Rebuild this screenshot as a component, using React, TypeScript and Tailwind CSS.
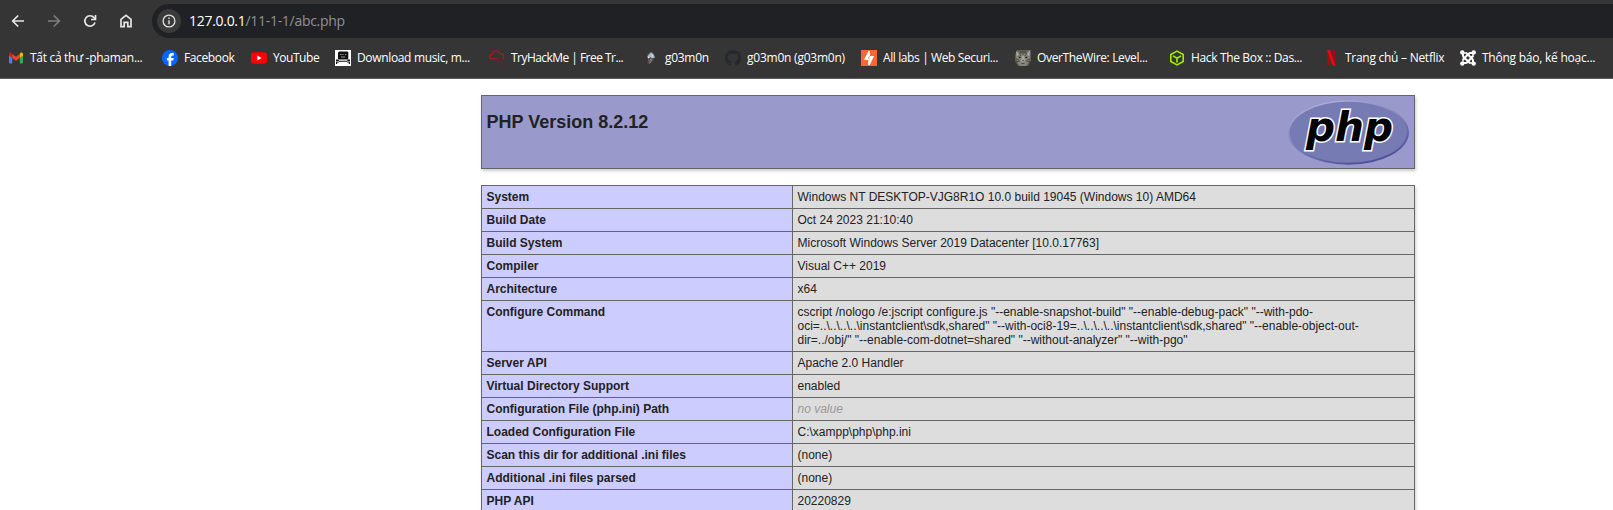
import React from "react";

const Gmail = () => (
  <svg viewBox="0 0 16 16" className="h-4 w-4">
    <path d="M1 4.500v8.100c0 .5.4.9.9.9h2.300V7.200z" fill="#4285f4" />
    <path d="M15 4.500v8.100c0 .5-.4.9-.9.9h-2.300V7.200z" fill="#34a853" />
    <path d="M11.700 3.900v4.100L15 5.500V4.200c0-1.400-1.500-2.100-2.500-1.300z" fill="#fbbc04" />
    <path d="M4.200 8V3.900L8 6.800l3.700-2.900V8L8 10.800z" fill="#ea4335" />
    <path d="M1 4.200v1.300L4.200 8V3.900l-.8-1C2.500 2.100 1 2.800 1 4.200z" fill="#c5221f" />
  </svg>
);

const Facebook = () => (
  <svg viewBox="0 0 16 16" className="h-4 w-4">
    <circle cx="8" cy="8" r="8" fill="#0866ff" />
    <path d="M6.600 15.900V10.500H4.900V8.100h1.700V7c0-2.700 1.200-3.900 3.700-3.900.5 0 1.100.1 1.500.2v2.200h-.9c-1.300 0-1.700.5-1.700 1.500v1.100h2.500l-.4 2.400H9.200v5.400a8 8 0 0 1-2.600 0z" fill="#fff" />
  </svg>
);

const YouTube = () => (
  <svg viewBox="0 0 16 16" className="h-4 w-4">
    <rect x="0" y="2.300" width="16" height="11.400" rx="3" fill="#f00" />
    <path d="M6.300 5.600 10.600 8l-4.300 2.400z" fill="#fff" />
  </svg>
);

const Music = () => (
  <svg viewBox="0 0 16 16" className="h-4 w-4">
    <rect width="16" height="16" fill="#fff" />
    <path d="M4 1.500h8.500l.8 1V9.500H3V2.500z" fill="#111" />
    <path d="M5 4h1.500v1H5zM7.200 4h1.500v.8H7.200zM10 4h1.200v1H10zM6 6.600h4v.8H6z" fill="#999" />
    <path d="M1 9.500h2l1 1.200h8l1-1.200h2v4.500h-1.200v-1.500H12v-.7H4v.7H2.200V14H1z" fill="#111" />
    <path d="M1 11h3v.8H1zM12 11h3v.8h-3z" fill="#bbb" />
  </svg>
);

const TryHackMe = () => (
  <svg viewBox="0 0 16 16" className="h-4 w-4" fill="none" stroke="#c11111" strokeWidth="1.100">
    <path d="M8 8.700H2.900C1.500 8.700.6 7.800.6 6.600c0-1.300 1-2.200 2.600-2.100C3.200 2.300 5 .8 7 .8c1.900 0 3.200 1.100 3.600 2.700 2.200-.4 4 .8 4.200 2.700.1 1-.3 1.900-1 2.500" />
    <path d="M8.500 8.500h2M12.500 8.500h1M8.500 11h1.500M11.500 11h2.500M10 13.200h1M12.500 13.200h2.500M12.500 15.300h2" strokeDasharray="1.500 .6" stroke="#8f1a1e" />
  </svg>
);

const Mask = () => (
  <svg viewBox="0 0 16 16" className="h-4 w-4">
    <path d="M3.500 4.500 7 1.800l3.500 1.200 1.500 4-2 4-3.500 3.500-2-1 .5-4z" fill="#4b4750" />
    <path d="M5 5.500 8 2.200l2.500 2L12 7.500 9 8.500 7.500 7 5 8z" fill="#aebbc4" />
    <path d="M8.500 4 10 6l-1 1zM4 6.500l3 .5-1.500 1.500z" fill="#e6edf0" />
    <path d="m7 8.500 2.500.5-1 3-2.500 2z" fill="#787078" />
    <path d="m5 9 1.500 1L6 12z" fill="#8d4e42" />
  </svg>
);

const GitHub = () => (
  <svg viewBox="0 0 16 16" className="h-4 w-4">
    <path d="M8 0C3.580 0 0 3.580 0 8c0 3.540 2.290 6.530 5.470 7.590.4.070.55-.17.55-.38 0-.19-.01-.82-.01-1.490-2.010.37-2.530-.49-2.690-.94-.09-.23-.48-.94-.82-1.130-.28-.15-.68-.52-.01-.53.63-.01 1.080.58 1.230.82.720 1.210 1.870.87 2.330.66.07-.52.28-.87.51-1.070-1.780-.2-3.640-.89-3.640-3.950 0-.87.31-1.590.82-2.150-.08-.2-.36-1.020.08-2.120 0 0 .67-.21 2.200.82.64-.18 1.320-.27 2-.27s1.360.09 2 .27c1.530-1.040 2.200-.82 2.200-.82.44 1.100.16 1.920.08 2.120.51.56.82 1.270.82 2.150 0 3.070-1.870 3.750-3.650 3.950.29.25.54.73.54 1.480 0 1.070-.01 1.930-.01 2.200 0 .21.15.46.55.38A8.010 8.010 0 0 0 16 8c0-4.420-3.580-8-8-8z" fill="#24292f" />
  </svg>
);

const Burp = () => (
  <svg viewBox="0 0 16 16" className="h-4 w-4">
    <rect width="16" height="16" fill="#ff6633" />
    <path d="M9 1v5h4L8.800 15h-1.600V10H3L7.400 1z" fill="#fff" />
    <path d="M7 1v4.600L4.800 6.600M9 15v-4.600l2.200-1" stroke="#ff6633" strokeWidth="0" fill="none" />
    <path d="M9.200 6.200 7.200 8l1.600 1.200" stroke="#ff6633" strokeWidth=".7" fill="none" />
  </svg>
);

const Cat = () => (
  <svg viewBox="0 0 16 16" className="h-4 w-4">
    <rect width="16" height="16" fill="#5f5f58" />
    <path d="M1 0 5 3h6l4-3v8l-1.500 5L11 16H5l-2.500-3L1 8z" fill="#85857a" />
    <path d="M1 1 4 4 2 6zM15 1l-3 3 2 2z" fill="#b5b1a5" />
    <path d="M6 1v3M8 1v4M10 1v3M1 9l3 1M1 12l4-1M15 9l-3 1M15 12l-4-1M4 3l2 3M12 3l-2 3" stroke="#3b3c38" strokeWidth=".8" />
    <path d="m3 6.500 3 .5-1 1.500zM13 6.500 10 7l1 1.500z" fill="#1c201c" />
    <path d="M7 6h2l1 5-2 1.500L6 11z" fill="#aaa69b" />
    <path d="M7 10h2l-1 1.500zM6 13h4l-2 1z" fill="#353331" />
    <path d="M0 0h2L0 5zM0 11l3 5H0zM16 11l-3 5h3z" fill="#34352f" />
  </svg>
);

const HackTheBox = () => (
  <svg viewBox="0 0 16 16" className="h-4 w-4" fill="none" stroke="#9fef00" strokeWidth="1.600" strokeLinejoin="round">
    <path d="M8 1.100 14.200 4.500v7L8 14.900 1.800 11.500v-7z" />
    <path d="M4 5.900 8 8.200l4-2.300M8 8.200v4.300" />
  </svg>
);

const Netflix = () => (
  <svg viewBox="0 0 16 16" className="h-4 w-4">
    <path d="M4 0h3v15.600L4 16zM9.500 0h3v16l-3-.4z" fill="#a70710" />
    <path d="M4 0h3l5.500 16-3-.4z" fill="#e50914" />
  </svg>
);

const Joomla = () => (
  <svg viewBox="0 0 16 16" className="h-4 w-4">
    <g fill="none" stroke="#fff" strokeWidth="2">
      <path d="M3 3.500v2c0 1 .4 1.500 1 2.100L10 13M3.500 13H5.500c1 0 1.500-.4 2.100-1L13 6M13 12.500v-2c0-1-.4-1.500-1-2.100L6.500 3.200M12.500 3h-2c-1 0-1.500.4-2.100 1L3 9.500" />
      <path d="M3 9v4M9 13h4M13 7V3M7 3H3" strokeWidth="1.400" />
    </g>
    <g fill="#fff">
      <circle cx="2.300" cy="2.400" r="2.200" />
      <circle cx="13.700" cy="2.400" r="2.200" />
      <circle cx="2.300" cy="13.600" r="2.200" />
      <circle cx="13.700" cy="13.600" r="2.200" />
    </g>
  </svg>
);

const bookmarks = [
  { label: "Tất cả thư -phaman...", icon: Gmail, slot: "w-[154px]", track: "tracking-[-0.3px]" },
  { label: "Facebook", icon: Facebook, slot: "w-[89px]", track: "tracking-[-0.38px]" },
  { label: "YouTube", icon: YouTube, slot: "w-[84px]", track: "tracking-[-0.45px]" },
  { label: "Download music, m...", icon: Music, slot: "w-[154px]", track: "tracking-[-0.34px]" },
  { label: "TryHackMe | Free Tr...", icon: TryHackMe, slot: "w-[154px]", track: "tracking-[-0.54px]" },
  { label: "g03m0n", icon: Mask, slot: "w-[82px]", track: "tracking-[-0.3px]" },
  { label: "g03m0n (g03m0n)", icon: GitHub, slot: "w-[136px]", track: "tracking-[-0.23px]" },
  { label: "All labs | Web Securi...", icon: Burp, slot: "w-[154px]", track: "tracking-[-0.39px]" },
  { label: "OverTheWire: Level...", icon: Cat, slot: "w-[154px]", track: "tracking-[-0.35px]" },
  { label: "Hack The Box :: Das...", icon: HackTheBox, slot: "w-[154px]", track: "tracking-[-0.35px]" },
  { label: "Trang chủ – Netflix", icon: Netflix, slot: "w-[137px]", track: "tracking-[-0.27px]" },
  { label: "Thông báo, kế hoạc...", icon: Joomla, slot: "w-[150px]", track: "tracking-[-0.24px]" },
];

const rows: { name: string; value: React.ReactNode }[] = [
  { name: "System", value: "Windows NT DESKTOP-VJG8R1O 10.0 build 19045 (Windows 10) AMD64" },
  { name: "Build Date", value: "Oct 24 2023 21:10:40" },
  { name: "Build System", value: "Microsoft Windows Server 2019 Datacenter [10.0.17763]" },
  { name: "Compiler", value: "Visual C++ 2019" },
  { name: "Architecture", value: "x64" },
  {
    name: "Configure Command",
    value: (
      <>
        cscript /nologo /e:jscript configure.js "--enable-snapshot-build" "--enable-debug-pack" "--with-pdo-
        <br />
        {'oci=..\\..\\..\\..\\instantclient\\sdk,shared" "--with-oci8-19=..\\..\\..\\..\\instantclient\\sdk,shared" "--enable-object-out-'}
        <br />
        dir=../obj/" "--enable-com-dotnet=shared" "--without-analyzer" "--with-pgo"
      </>
    ),
  },
  { name: "Server API", value: "Apache 2.0 Handler" },
  { name: "Virtual Directory Support", value: "enabled" },
  { name: "Configuration File (php.ini) Path", value: <i className="text-[#999]">no value</i> },
  { name: "Loaded Configuration File", value: "C:\\xampp\\php\\php.ini" },
  { name: "Scan this dir for additional .ini files", value: "(none)" },
  { name: "Additional .ini files parsed", value: "(none)" },
  { name: "PHP API", value: "20220829" },
];

const Toolbar = () => (
  <div className="flex h-[42px] items-center">
    <div className="flex h-full w-[152px] shrink-0 items-center gap-5 pl-[10px]">
      <svg viewBox="0 0 16 16" className="h-4 w-4 shrink-0" fill="none" stroke="#e6e6e6" strokeWidth="1.700">
        <path d="M14 8H3M8.200 2.500 2.700 8l5.500 5.500" />
      </svg>
      <svg viewBox="0 0 16 16" className="h-4 w-4 shrink-0" fill="none" stroke="#7d7d7d" strokeWidth="1.700">
        <path d="M2 8h11M7.800 2.500 13.300 8l-5.500 5.500" />
      </svg>
      <svg viewBox="0 0 16 16" className="h-4 w-4 shrink-0" fill="none" stroke="#e6e6e6" strokeWidth="1.700">
        <path d="M13 9.500A5.200 5.200 0 1 1 12 4.600L13 6" />
        <path d="M13.500 2v4.500H9" />
      </svg>
      <svg viewBox="0 0 16 16" className="h-4 w-4 shrink-0" fill="none" stroke="#e6e6e6" strokeWidth="1.700">
        <path d="M3 6.300 8 2.400l5 3.900v7.400H9.800V9.300H6.200v4.400H3z" />
      </svg>
    </div>
    <div className="flex h-[34px] flex-1 items-center rounded-l-[17px] bg-[#202124] pl-[5px]">
      <div className="flex h-6 w-6 items-center justify-center rounded-full bg-[#3a3a3a]">
        <svg viewBox="0 0 16 16" className="h-4 w-4" fill="none" stroke="#e0e0e0" strokeWidth="1.300">
          <circle cx="8" cy="8" r="5.900" />
          <path d="M8 7.200v4M8 4.600v1.400" strokeWidth="1.400" />
        </svg>
      </div>
      <div className="ml-2 whitespace-nowrap text-[14px] leading-5 tracking-[-0.29px] text-white">
        127.0.0.1<span className="text-[#8e9195]">/11-1-1/abc.php</span>
      </div>
    </div>
  </div>
);

const PhpLogo = () => (
  <svg viewBox="0 0 121 65" className="h-[65px] w-[121px]">
    <defs>
      <linearGradient id="rim" x1="0.25" y1="0" x2="0.75" y2="1">
        <stop offset="0" stopColor="#b0b3da" />
        <stop offset="0.5" stopColor="#7a7db5" />
        <stop offset="1" stopColor="#484893" />
      </linearGradient>
    </defs>
    <ellipse cx="60.500" cy="32.500" rx="60.500" ry="32.300" fill="url(#rim)" />
    <ellipse cx="60.300" cy="32.300" rx="58.700" ry="30.500" fill="#777bb3" />
    <text
      x="18"
      y="41"
      fontFamily="DejaVu Sans"
      fontWeight="bold"
      fontStyle="italic"
      fontSize="41"
      textLength="87"
      lengthAdjust="spacingAndGlyphs"
      stroke="#fff"
      strokeWidth="3"
      paintOrder="stroke"
      fill="#000"
    >
      php
    </text>
  </svg>
);

export default function App() {
  return (
    <div className="h-[510px] w-full overflow-hidden bg-white">
      <header className="flex h-[79px] flex-col overflow-hidden border-b border-[#5c5c5c] bg-[#353535] font-['Open_Sans',sans-serif]">
        <Toolbar />
        <nav className="flex h-8 items-center pl-2 text-[12px] text-white">
          {bookmarks.map(({ label, icon: Icon, slot, track }) => (
            <div key={label} className={`flex shrink-0 items-center gap-[6px] ${slot}`}>
              <Icon />
              <span className={`whitespace-nowrap leading-4 ${track}`}>{label}</span>
            </div>
          ))}
        </nav>
      </header>
      <main className="flex flex-col gap-4 pl-[481px] pt-4 font-['Liberation_Sans',sans-serif] text-[#222]">
        <div className="flex h-[74px] w-[934px] justify-between border border-[#666] bg-[#9999cc] pl-[4.500px] pr-[5px] pt-1 shadow-[1px_2px_3px_#ccc]">
          <h1 className="pt-[12px] text-[18px] font-bold leading-[21px]">PHP Version 8.2.12</h1>
          <PhpLogo />
        </div>
        <table className="w-[934px] table-fixed border-collapse text-[12px] leading-[14px] shadow-[1px_2px_3px_#ccc]">
          <colgroup>
            <col className="w-[311px]" />
            <col />
          </colgroup>
          <tbody>
            {rows.map(({ name, value }) => (
              <tr key={name}>
                <td className="border border-[#666] bg-[#ccccff] py-1 pl-[4.5px] pr-1 align-top font-bold">{name}</td>
                <td className="whitespace-nowrap border border-[#666] bg-[#dddddd] py-1 pl-[4.5px] pr-1 align-top">{value}</td>
              </tr>
            ))}
          </tbody>
        </table>
      </main>
    </div>
  );
}
